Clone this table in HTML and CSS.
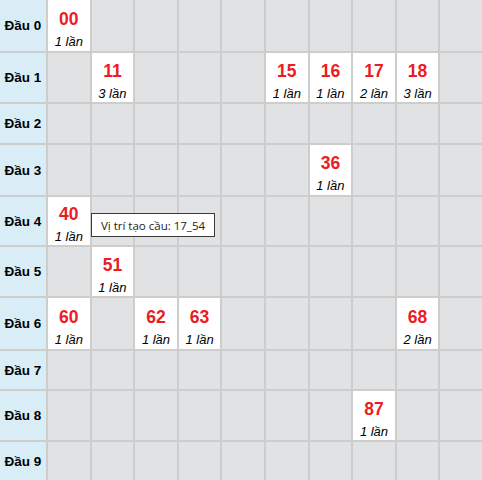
FILE: index.html
```html
<!DOCTYPE html>
<html lang="vi">
<head>
<meta charset="utf-8">
<title>Bảng đầu</title>
<link rel="stylesheet" href="styles.css">
</head>
<body>
<div class="board">
  <div class="grid">
    <div class="head">Đầu 0</div>
    <div class="cell hit"><span class="num">00</span><span class="cnt">1 lần</span></div>
    <div class="cell"></div><div class="cell"></div><div class="cell"></div><div class="cell"></div><div class="cell"></div><div class="cell"></div><div class="cell"></div><div class="cell"></div><div class="cell"></div>

    <div class="head">Đầu 1</div>
    <div class="cell"></div>
    <div class="cell hit"><span class="num">11</span><span class="cnt">3 lần</span></div>
    <div class="cell"></div><div class="cell"></div><div class="cell"></div>
    <div class="cell hit"><span class="num">15</span><span class="cnt">1 lần</span></div>
    <div class="cell hit"><span class="num">16</span><span class="cnt">1 lần</span></div>
    <div class="cell hit"><span class="num">17</span><span class="cnt">2 lần</span></div>
    <div class="cell hit"><span class="num">18</span><span class="cnt">3 lần</span></div>
    <div class="cell"></div>

    <div class="head">Đầu 2</div>
    <div class="cell"></div><div class="cell"></div><div class="cell"></div><div class="cell"></div><div class="cell"></div><div class="cell"></div><div class="cell"></div><div class="cell"></div><div class="cell"></div><div class="cell"></div>

    <div class="head">Đầu 3</div>
    <div class="cell"></div><div class="cell"></div><div class="cell"></div><div class="cell"></div><div class="cell"></div><div class="cell"></div>
    <div class="cell hit"><span class="num">36</span><span class="cnt">1 lần</span></div>
    <div class="cell"></div><div class="cell"></div><div class="cell"></div>

    <div class="head">Đầu 4</div>
    <div class="cell hit"><span class="num">40</span><span class="cnt">1 lần</span></div>
    <div class="cell"></div><div class="cell"></div><div class="cell"></div><div class="cell"></div><div class="cell"></div><div class="cell"></div><div class="cell"></div><div class="cell"></div><div class="cell"></div>

    <div class="head">Đầu 5</div>
    <div class="cell"></div>
    <div class="cell hit"><span class="num">51</span><span class="cnt">1 lần</span></div>
    <div class="cell"></div><div class="cell"></div><div class="cell"></div><div class="cell"></div><div class="cell"></div><div class="cell"></div><div class="cell"></div><div class="cell"></div>

    <div class="head">Đầu 6</div>
    <div class="cell hit"><span class="num">60</span><span class="cnt">1 lần</span></div>
    <div class="cell"></div>
    <div class="cell hit"><span class="num">62</span><span class="cnt">1 lần</span></div>
    <div class="cell hit"><span class="num">63</span><span class="cnt">1 lần</span></div>
    <div class="cell"></div><div class="cell"></div><div class="cell"></div><div class="cell"></div>
    <div class="cell hit"><span class="num">68</span><span class="cnt">2 lần</span></div>
    <div class="cell"></div>

    <div class="head">Đầu 7</div>
    <div class="cell"></div><div class="cell"></div><div class="cell"></div><div class="cell"></div><div class="cell"></div><div class="cell"></div><div class="cell"></div><div class="cell"></div><div class="cell"></div><div class="cell"></div>

    <div class="head">Đầu 8</div>
    <div class="cell"></div><div class="cell"></div><div class="cell"></div><div class="cell"></div><div class="cell"></div><div class="cell"></div><div class="cell"></div>
    <div class="cell hit"><span class="num">87</span><span class="cnt">1 lần</span></div>
    <div class="cell"></div><div class="cell"></div>

    <div class="head">Đầu 9</div>
    <div class="cell"></div><div class="cell"></div><div class="cell"></div><div class="cell"></div><div class="cell"></div><div class="cell"></div><div class="cell"></div><div class="cell"></div><div class="cell"></div><div class="cell"></div>
  </div>
  <div class="tooltip">Vị trí tạo cầu: 17_54</div>
</div>
</body>
</html>
```

FILE: styles.css
```css
html, body {
  margin: 0;
  padding: 0;
  background: #ffffff;
}

body {
  font-family: "Liberation Sans", Arial, sans-serif;
  overflow: hidden;
}

.board {
  position: relative;
  width: 482px;
  height: 480px;
  overflow: hidden;
}

.grid {
  display: grid;
  grid-template-columns: 46px repeat(10, 1fr);
  grid-template-rows: 51px 49px 39px 50px 48px 49px 51px 38px 49px 38px;
  gap: 2px;
  background: #cdcdcd;
  width: 482px;
}

.head {
  background: #d9edf7;
  color: #000;
  font-weight: bold;
  font-size: 13.5px;
  display: flex;
  align-items: center;
  justify-content: center;
  white-space: nowrap;
}

.cell {
  background: #e1e2e4;
}

.cell.hit {
  background: #ffffff;
  display: flex;
  flex-direction: column;
  align-items: center;
  justify-content: center;
  padding-top: 7px;
  box-sizing: border-box;
}

.num {
  color: #ec1c24;
  font-weight: bold;
  font-size: 17.5px;
  line-height: 20px;
}

.cnt {
  color: #000;
  font-style: italic;
  font-size: 13px;
  line-height: 16px;
  margin-top: 5px;
  white-space: nowrap;
}

.tooltip {
  position: absolute;
  left: 91px;
  top: 213px;
  width: 124px;
  height: 24px;
  box-sizing: border-box;
  background: #ffffff;
  border: 1px solid #3a3a3a;
  font-family: "Open Sans", "Noto Sans", sans-serif;
  font-size: 11.5px;
  color: #222;
  display: flex;
  align-items: center;
  justify-content: center;
  white-space: nowrap;
}
```
